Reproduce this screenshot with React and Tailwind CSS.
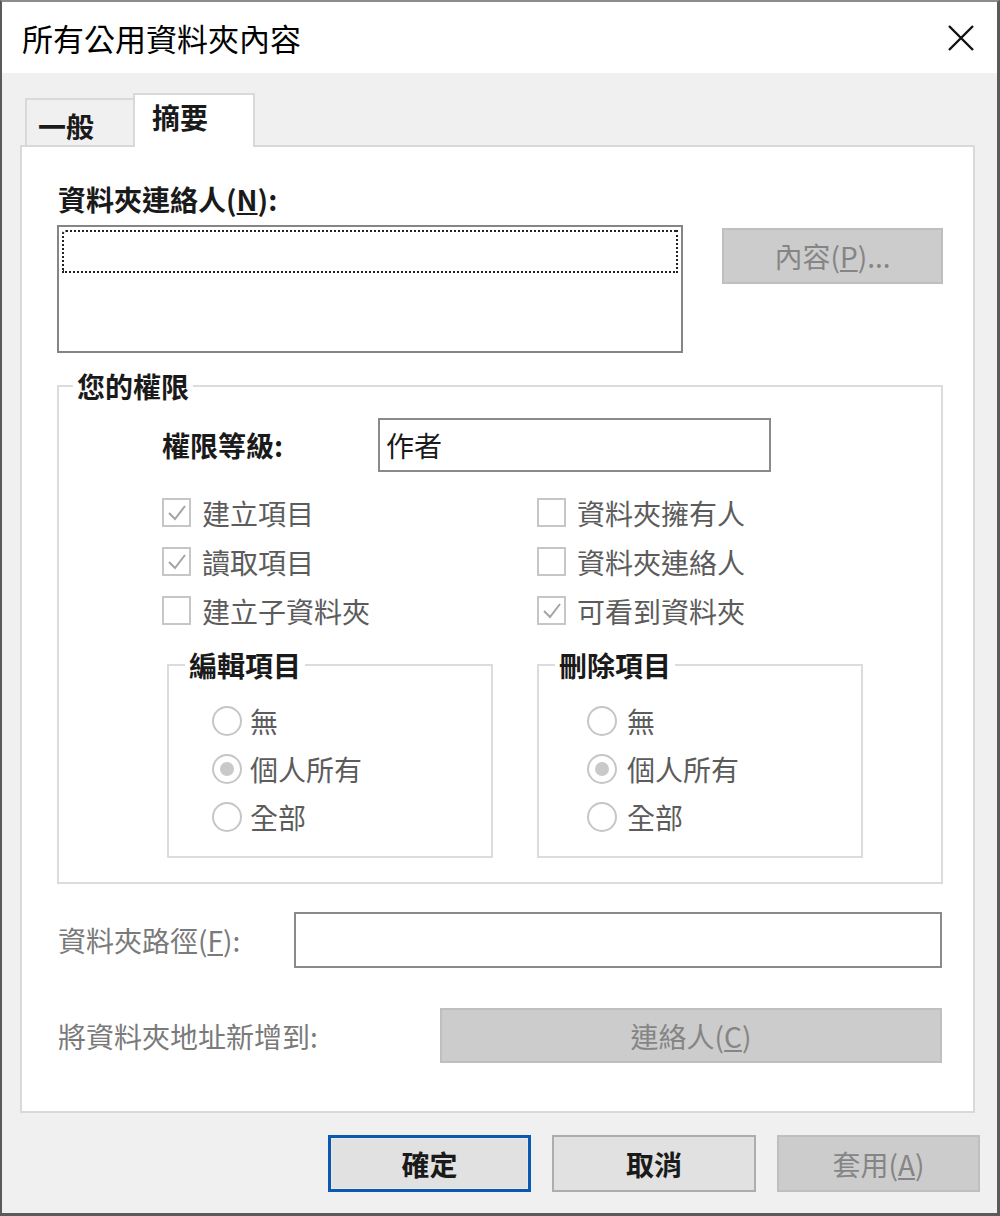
import React from 'react';

const font = { fontFamily: '"Noto Sans CJK TC", "Noto Sans", sans-serif' };

function CheckBox({ checked, label }) {
  return (
    <div className="flex items-center h-[49px] gap-[11px]">
      <span className="w-[29px] h-[29px] border-2 border-[#c6c6c6] bg-white flex items-center justify-center">
        {checked && (
          <svg width="22" height="22" viewBox="0 0 22 22">
            <polyline points="3,11 9,17 19,4" fill="none" stroke="#a3a3a3" strokeWidth="2" />
          </svg>
        )}
      </span>
      <span className="text-[28px] leading-[36px] text-[#5c5c5c]">{label}</span>
    </div>
  );
}

function Radio({ checked, label, gap }) {
  return (
    <div className={`flex items-center h-[48px] ${gap}`}>
      <span className="w-[30px] h-[30px] rounded-full border-2 border-[#c6c6c6] bg-white flex items-center justify-center">
        {checked && <span className="w-[14px] h-[14px] rounded-full bg-[#c9c9c9]" />}
      </span>
      <span className="text-[28px] leading-[36px] text-[#5c5c5c]">{label}</span>
    </div>
  );
}

function RadioGroup({ title, pl, gap, legendMl }) {
  return (
    <fieldset className="w-[326px] border-2 border-[#dcdcdc] pb-[15px]">
      <legend className={`${legendMl} px-[4px] text-[28px] leading-[36px] font-bold text-[#1a1a1a]`}>{title}</legend>
      <div className={`mt-[14px] ${pl}`}>
        <Radio label="無" gap={gap} />
        <Radio checked label="個人所有" gap={gap} />
        <Radio label="全部" gap={gap} />
      </div>
    </fieldset>
  );
}

export default function App() {
  return (
    <div
      style={font}
      className="w-[1000px] h-[1216px] flex flex-col border-t-2 border-l-2 border-r-[3px] border-b-[3px] border-t-[#8c8c8c] border-l-[#5a5a5a] border-r-[#5a5a5a] border-b-[#5a5a5a] bg-[#f0f0f0]"
    >
      {/* Title bar */}
      <div className="h-[71px] bg-white flex items-center justify-between pl-[20px] pr-[22px] shrink-0">
        <span className="text-[31px] leading-[40px] text-black">所有公用資料夾內容</span>
        <svg width="28" height="28" viewBox="0 0 28 28">
          <path d="M2 2 L26 26 M26 2 L2 26" stroke="#111" strokeWidth="2.4" />
        </svg>
      </div>

      <div className="flex-1 pt-[20px] pl-[18px] pr-[22px]">
        {/* Tabs */}
        <div className="flex items-end h-[52px]">
          <div className="ml-[5px] w-[108px] h-[47px] border-l-2 border-t-2 border-[#d9d9d9] bg-[#f0f0f0] flex items-center pl-[11px]">
            <span className="text-[28px] leading-[36px] font-bold text-[#1a1a1a] mt-[6px]">一般</span>
          </div>
          <div className="relative z-10 -mb-[2px] w-[122px] h-[54px] border-l-2 border-t-2 border-r-2 border-[#d9d9d9] bg-white flex pl-[17px]">
            <span className="text-[28px] leading-[36px] font-bold text-[#1a1a1a] mt-[4px]">摘要</span>
          </div>
        </div>

        {/* Tab panel */}
        <div className="w-[955px] h-[968px] bg-white border-2 border-[#d9d9d9] pt-[34px] pl-[35px]">
          <div className="ml-[1px] text-[28px] leading-[36px] font-bold text-[#1a1a1a]">
            資料夾連絡人(<span className="underline">N</span>):
          </div>

          <div className="flex items-start gap-[39px] mt-[8px]">
            <div className="w-[626px] h-[128px] border-2 border-[#858585] p-[3px]">
              <div className="h-[43px] border-2 border-dotted border-[#222] rounded-tl-[4px]" />
            </div>
            <div className="mt-[3px] w-[221px] h-[56px] bg-[#cccccc] border-2 border-[#bfbfbf] flex items-center justify-center text-[28px] leading-[36px] text-[#858585]">
              內容(<span className="underline">P</span>)...
            </div>
          </div>

          {/* Your permissions */}
          <fieldset className="mt-[15px] w-[886px] border-2 border-[#dcdcdc] pb-[24px]">
            <legend className="ml-[14px] px-[4px] text-[28px] leading-[36px] font-bold text-[#1a1a1a]">您的權限</legend>

            <div className="flex items-center mt-[14px] pl-[103px]">
              <span className="w-[216px] text-[28px] leading-[36px] font-bold text-[#1a1a1a]">權限等級:</span>
              <div className="w-[393px] h-[54px] border-2 border-[#8a8a8a] flex items-center pl-[6px] text-[28px] leading-[36px] text-[#1a1a1a]">
                作者
              </div>
            </div>

            <div className="grid grid-cols-[375px_1fr] mt-[16px] pl-[103px]">
              <CheckBox checked label="建立項目" />
              <CheckBox label="資料夾擁有人" />
              <CheckBox checked label="讀取項目" />
              <CheckBox label="資料夾連絡人" />
              <CheckBox label="建立子資料夾" />
              <CheckBox checked label="可看到資料夾" />
            </div>

            <div className="flex gap-[44px] mt-[12px] pl-[108px]">
              <RadioGroup title="編輯項目" pl="pl-[43px]" gap="gap-[8px]" legendMl="ml-[16px]" />
              <RadioGroup title="刪除項目" pl="pl-[48px]" gap="gap-[10px]" legendMl="ml-[16px]" />
            </div>
          </fieldset>

          <div className="flex items-center mt-[28px] h-[56px]">
            <span className="ml-[1px] w-[236px] text-[28px] leading-[36px] text-[#7a7a7a]">
              資料夾路徑(<span className="underline">F</span>):
            </span>
            <div className="w-[648px] h-[56px] border-2 border-[#8a8a8a] bg-white" />
          </div>

          <div className="flex items-center mt-[40px] h-[55px]">
            <span className="ml-[1px] w-[382px] text-[28px] leading-[36px] text-[#7a7a7a]">將資料夾地址新增到:</span>
            <div className="w-[502px] h-[55px] bg-[#cccccc] border-2 border-[#bfbfbf] flex items-center justify-center text-[28px] leading-[36px] text-[#858585]">
              連絡人(<span className="underline">C</span>)
            </div>
          </div>
        </div>

        {/* Dialog buttons */}
        <div className="flex justify-end gap-[21px] mt-[22px] -mr-[5px]">
          <div className="w-[203px] h-[57px] border-[3px] border-[#0a59b0] bg-[#e1e1e1] flex items-center justify-center">
            <div className="w-full h-full border border-[#e8e8e8] flex items-center justify-center text-[28px] leading-[36px] font-bold text-[#1a1a1a]">
              確定
            </div>
          </div>
          <div className="w-[204px] h-[57px] border-2 border-[#adadad] bg-[#e1e1e1] flex items-center justify-center text-[28px] leading-[36px] font-bold text-[#1a1a1a]">
            取消
          </div>
          <div className="w-[203px] h-[57px] border-2 border-[#bfbfbf] bg-[#cccccc] flex items-center justify-center text-[28px] leading-[36px] text-[#858585]">
            套用(<span className="underline">A</span>)
          </div>
        </div>
      </div>
    </div>
  );
}
